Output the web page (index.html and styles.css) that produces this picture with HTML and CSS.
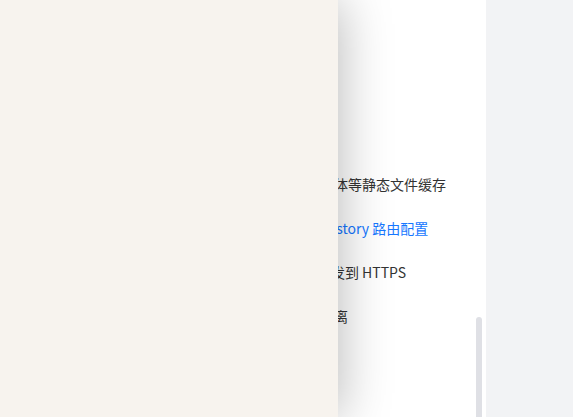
FILE: index.html
```html
<!DOCTYPE html>
<html lang="zh-CN">
<head>
<meta charset="utf-8">
<title>Nginx 配置</title>
<link rel="stylesheet" href="styles.css">
</head>
<body>
<div class="page">
  <main class="content">
    <ul class="toc">
      <li class="toc-item">配置图片、字体等静态文件缓存</li>
      <li class="toc-item toc-item--active">Vue 项目的 History 路由配置</li>
      <li class="toc-item">HTTP 请求转发到 HTTPS</li>
      <li class="toc-item">实现前后端分离</li>
    </ul>
    <div class="scroll-thumb"></div>
  </main>
  <div class="aside"></div>
</div>
<div class="drawer"></div>
</body>
</html>
```

FILE: styles.css
```css
html, body {
  margin: 0;
  height: 100%;
}
body {
  background: #f2f3f5;
  font-family: "Noto Sans CJK SC", "Noto Sans", sans-serif;
  color: #333;
  overflow: hidden;
}
.page {
  display: flex;
  height: 100vh;
}
.content {
  position: relative;
  width: 486px;
  flex: none;
  background: #fff;
}
.aside {
  flex: 1;
}
.toc {
  list-style: none;
  margin: 0;
  padding: 162px 0 0 250px;
}
.toc-item {
  font-size: 14px;
  line-height: 22px;
  padding: 11px 0;
  white-space: nowrap;
}
.toc-item--active {
  color: #1677ff;
}
.scroll-thumb {
  position: absolute;
  right: 4px;
  top: 317px;
  bottom: 0;
  width: 6px;
  background: #dfe0e5;
  border-radius: 3px 3px 0 0;
}
.drawer {
  position: fixed;
  left: 0;
  top: 0;
  bottom: 0;
  width: 338px;
  background: #f7f3ee;
  box-shadow: 2px 0 48px rgba(0, 0, 0, 0.28);
}
```
